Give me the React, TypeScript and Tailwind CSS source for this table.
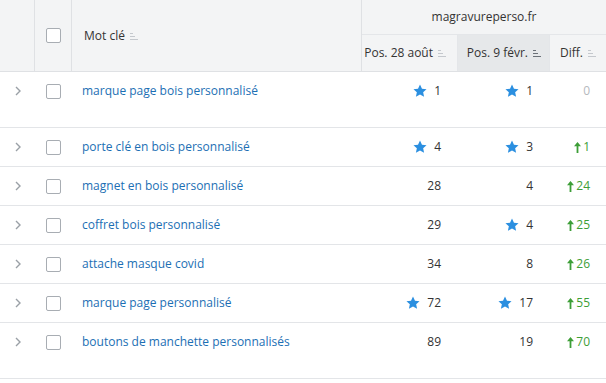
import React from 'react'

type Row = {
  keyword: string
  pos1: number
  star1?: boolean
  pos2: number
  star2?: boolean
  diff: number
  tall?: boolean
}

const rows: Row[] = [
  { keyword: 'marque page bois personnalisé', pos1: 1, star1: true, pos2: 1, star2: true, diff: 0, tall: true },
  { keyword: 'porte clé en bois personnalisé', pos1: 4, star1: true, pos2: 3, star2: true, diff: 1 },
  { keyword: 'magnet en bois personnalisé', pos1: 28, pos2: 4, diff: 24 },
  { keyword: 'coffret bois personnalisé', pos1: 29, pos2: 4, star2: true, diff: 25 },
  { keyword: 'attache masque covid', pos1: 34, pos2: 8, diff: 26 },
  { keyword: 'marque page personnalisé', pos1: 72, star1: true, pos2: 17, star2: true, diff: 55 },
  { keyword: 'boutons de manchette personnalisés', pos1: 89, pos2: 19, diff: 70, tall: true },
]

const cols = 'grid grid-cols-[35px_37px_290px_96px_92px_56px]'

function SortIcon({ active }: { active?: boolean }) {
  return (
    <svg width="8" height="8" viewBox="0 0 8 8" className="ml-[5px] shrink-0">
      <g stroke={active ? '#6b7178' : '#c4c8cd'} strokeWidth="1">
        <line x1="0" y1="1.5" x2="3" y2="1.5" />
        <line x1="0" y1="4.5" x2="5" y2="4.5" />
        <line x1="0" y1="7.5" x2="8" y2="7.5" />
      </g>
    </svg>
  )
}

function Star() {
  return (
    <svg width="14" height="14" viewBox="0 0 24 24" className="mr-[7px] shrink-0">
      <path
        fill="#2b8fe0"
        d="M12 1l3.4 7.1 7.8.9-5.8 5.3 1.6 7.7L12 18.1l-7 3.9 1.6-7.7L.8 9l7.8-.9z"
      />
    </svg>
  )
}

function Checkbox() {
  return <div className="w-[15px] h-[15px] rounded-[2px] border border-[#a8adb3] bg-white" />
}

function Chevron() {
  return (
    <svg width="6" height="10" viewBox="0 0 6 10">
      <path d="M1 1l4 4-4 4" fill="none" stroke="#9aa0a6" strokeWidth="1.4" />
    </svg>
  )
}

function Pos({ value, star }: { value: number; star?: boolean }) {
  return (
    <div className="flex items-center justify-end pr-[17px] h-[38px] text-[#333]">
      {star && <Star />}
      <span>{value}</span>
    </div>
  )
}

function Diff({ value }: { value: number }) {
  if (value === 0) {
    return <div className="flex items-center justify-end pr-[16px] h-[38px] text-[#b5b9be]">0</div>
  }
  return (
    <div className="flex items-center justify-end pr-[16px] h-[38px] text-[#3d9e37]">
      <svg width="7" height="11" viewBox="0 0 7 11" className="mr-[2px]">
        <path d="M3.5 0L7 4.2H4.4V11H2.6V4.2H0z" fill="#3d9e37" />
      </svg>
      <span>{value}</span>
    </div>
  )
}

export default function App() {
  return (
    <div className="w-[606px] h-[383px] overflow-hidden bg-white text-[12px] whitespace-nowrap font-['Open_Sans',sans-serif]">
      {/* header */}
      <div className={`${cols} h-[72px] bg-[#f3f4f5] border-b border-[#dfe1e4] text-[#333]`}>
        <div className="border-r border-[#dfe1e4]" />
        <div className="flex items-center justify-center border-r border-[#dfe1e4]">
          <Checkbox />
        </div>
        <div className="flex items-center pl-[12px] border-r border-[#dfe1e4]">
          <span>Mot clé</span>
          <SortIcon />
        </div>
        <div className="col-span-3 flex flex-col">
          <div className="h-[35px] flex items-center justify-center border-b border-[#e4e6e9]">magravureperso.fr</div>
          <div className="flex-1 grid grid-cols-[96px_92px_56px]">
            <div className="flex items-center justify-end pr-[11px] border-r border-[#e4e6e9]">
              <span>Pos. 28 août</span>
              <SortIcon />
            </div>
            <div className="flex items-center justify-end pr-[8px] bg-[#e6e8ea] border-r border-[#e4e6e9]">
              <span>Pos. 9 févr.</span>
              <SortIcon active />
            </div>
            <div className="flex items-center pl-[10px]">
              <span>Diff.</span>
              <SortIcon />
            </div>
          </div>
        </div>
      </div>

      {/* rows */}
      {rows.map((r) => (
        <div key={r.keyword} className={`${cols} border-b border-[#e3e5e8] ${r.tall ? 'pb-[17px]' : ''}`}>
          <div className="flex items-center justify-center h-[38px]">
            <Chevron />
          </div>
          <div className="flex items-center justify-center h-[38px]">
            <Checkbox />
          </div>
          <div className="flex items-center pl-[10px] h-[38px] text-[#1c6fb4]">{r.keyword}</div>
          <Pos value={r.pos1} star={r.star1} />
          <Pos value={r.pos2} star={r.star2} />
          <Diff value={r.diff} />
        </div>
      ))}
    </div>
  )
}
